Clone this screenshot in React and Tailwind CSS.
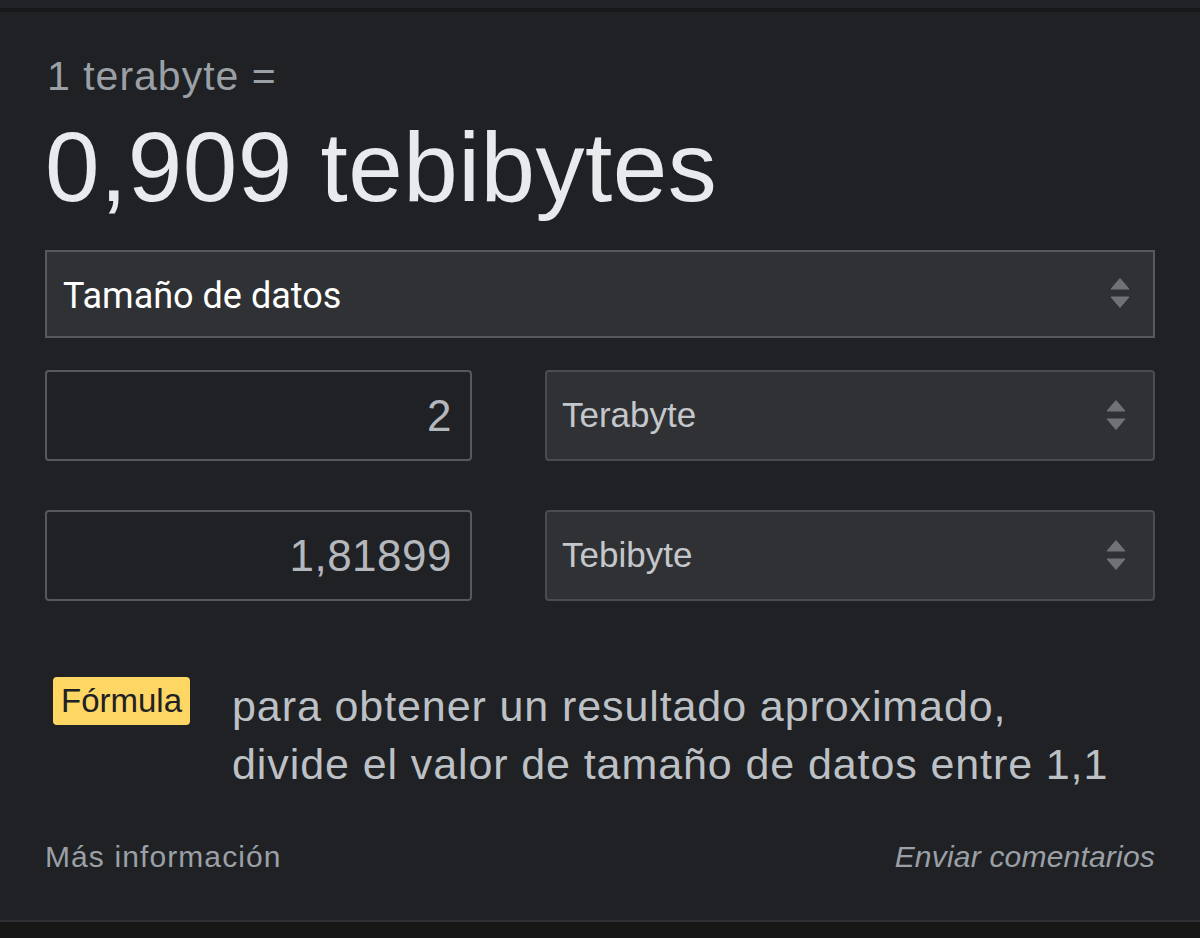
function Arrows() {
  return (
    <svg width="22" height="34" viewBox="0 0 22 34" className="shrink-0">
      <path d="M11 1.5 L20 12 L2 12 Z" fill="#6f7276" strokeLinejoin="round" stroke="#6f7276" strokeWidth="1" />
      <path d="M2 20 L20 20 L11 30.5 Z" fill="#6f7276" strokeLinejoin="round" stroke="#6f7276" strokeWidth="1" />
    </svg>
  );
}

function UnitRow({ value, unit }) {
  return (
    <div className="flex gap-[73px]">
      <div className="w-[427px] h-[91px] border-2 border-[#55585c] rounded-[4px] flex items-center justify-end pr-[18px] text-[44px] tracking-[0.5px] text-[#b4b8bd]">
        {value}
      </div>
      <div className="flex-1 h-[91px] bg-[#303134] border-2 border-[#4a4c50] rounded-[4px] flex items-center justify-between pl-[15px] pr-[26px] text-[35px] text-[#c4c7cb]">
        <span>{unit}</span>
        <Arrows />
      </div>
    </div>
  );
}

export default function App() {
  return (
    <div
      className="w-[1200px] h-[938px] bg-[#171717] flex flex-col overflow-hidden"
      style={{ fontFamily: '"Liberation Sans", Arial, sans-serif' }}
    >
      <div className="h-[8px] bg-[#222327]" />
      <div className="h-[4px] bg-[#17181a]" />
      <div className="h-[910px] bg-[#202124] border-b-2 border-[#2f3033] px-[45px] pt-[40px]">
        <div className="text-[41px] leading-[48px] tracking-[1px] text-[#9aa0a6] pl-[2px]">1 terabyte =</div>
        <div className="text-[98px] leading-[114px] text-[#e8eaed] mt-[10px] tracking-[0.5px]">
          0,909 tebibytes
        </div>

        {/* Quantity selector */}
        <div
          className="mt-[26px] h-[88px] bg-[#303134] border-2 border-[#55585c] flex items-center justify-between pl-[16px] pr-[22px] text-[36px] text-white"
          style={{ fontFamily: 'Roboto, "Liberation Sans", sans-serif' }}
        >
          <span className="translate-y-[2px]">Tamaño de datos</span>
          <Arrows />
        </div>

        <div className="mt-[32px] flex flex-col gap-[49px]">
          <UnitRow value="2" unit="Terabyte" />
          <UnitRow value="1,81899" unit="Tebibyte" />
        </div>

        {/* Formula */}
        <div className="mt-[76px] flex items-start gap-[42px] pl-[8px]">
          <span className="mt-[0px] bg-[#fdd663] text-[#202124] text-[33px] leading-[48px] px-[8px] rounded-[4px]">
            Fórmula
          </span>
          <p className="text-[43px] leading-[58px] tracking-[0.9px] text-[#bdc1c6] mt-[0px]">
            para obtener un resultado aproximado,
            <br />
            divide el valor de tamaño de datos entre 1,1
          </p>
        </div>

        {/* Footer */}
        <div className="mt-[41px] flex justify-between items-center text-[30px] text-[#9aa0a6]">
          <span className="tracking-[1.1px]">Más información</span>
          <span className="italic tracking-[0.2px]">Enviar comentarios</span>
        </div>
      </div>
    </div>
  );
}
